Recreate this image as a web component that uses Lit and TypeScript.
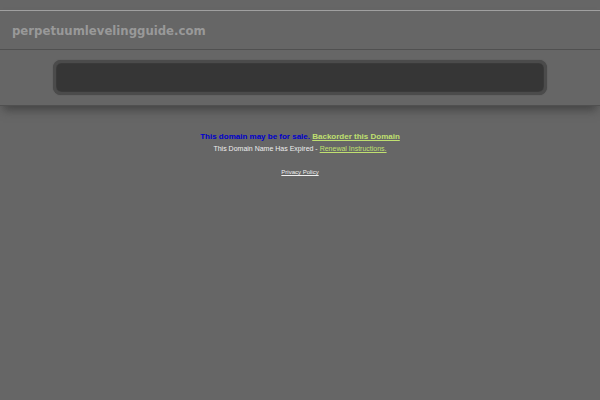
import { LitElement, html, css } from 'lit';

export class AppRoot extends LitElement {
    static get properties() {
        return {
            domain: { type: String }
        };
    }

    domain: string;

    constructor() {
        super();
        this.domain = 'perpetuumlevelingguide.com';
    }

    render() {
        return html`
            <header class="header">
                <h1 class="domain">${this.domain}</h1>
                <div class="banner">
                    <div class="panel"></div>
                </div>
            </header>
            <main class="notice">
                <p class="sale">This domain may be for sale. <a href="#backorder">Backorder this Domain</a></p>
                <p class="expired">This Domain Name Has Expired - <a href="#renewal">Renewal Instructions.</a></p>
            </main>
            <footer class="footer">
                <a href="#privacy">Privacy Policy</a>
            </footer>
        `;
    }

    static styles = [
        css`
            :host {
                display: block;
                box-sizing: border-box;
                min-height: 100vh;
                padding-top: 10px;
                background-color: #666;
                font-family: 'Liberation Sans', Arial, sans-serif;
                color: #eee;
            }

            .header {
                border-top: 1px solid #a0a0a0;
                box-shadow: 0 7px 9px -3px #444;
                background-color: #666;
            }

            .domain {
                margin: 0;
                padding: 2px 12px 0;
                border-bottom: 1px solid #505050;
                font-family: 'DejaVu Sans Condensed', 'DejaVu Sans', sans-serif;
                font-size: 13px;
                line-height: 36px;
                font-weight: 700;
                color: #999;
            }

            .banner {
                padding: 10px 9%;
                border-bottom: 1px solid #505050;
            }

            .panel {
                box-sizing: border-box;
                height: 35px;
                margin: 0 -1px;
                border: 3px solid #4b4b4b;
                border-radius: 8px;
                background-color: #363636;
                box-shadow: 0 0 1px #444, inset 0 0 1px #666;
            }

            .notice {
                padding-top: 25px;
                text-align: center;
            }

            .notice p {
                margin: 0;
            }

            .sale {
                font-size: 8px;
                line-height: 12px;
                font-weight: 700;
                color: #0000cc;
            }

            .expired {
                font-size: 7px;
                line-height: 12px;
            }

            .notice a {
                color: #c0e070;
            }

            .footer {
                padding-top: 12px;
                text-align: center;
                font-size: 6px;
                line-height: 10px;
            }

            .footer a {
                color: #eee;
            }
        `
    ];
}
customElements.define('app-root', AppRoot);
